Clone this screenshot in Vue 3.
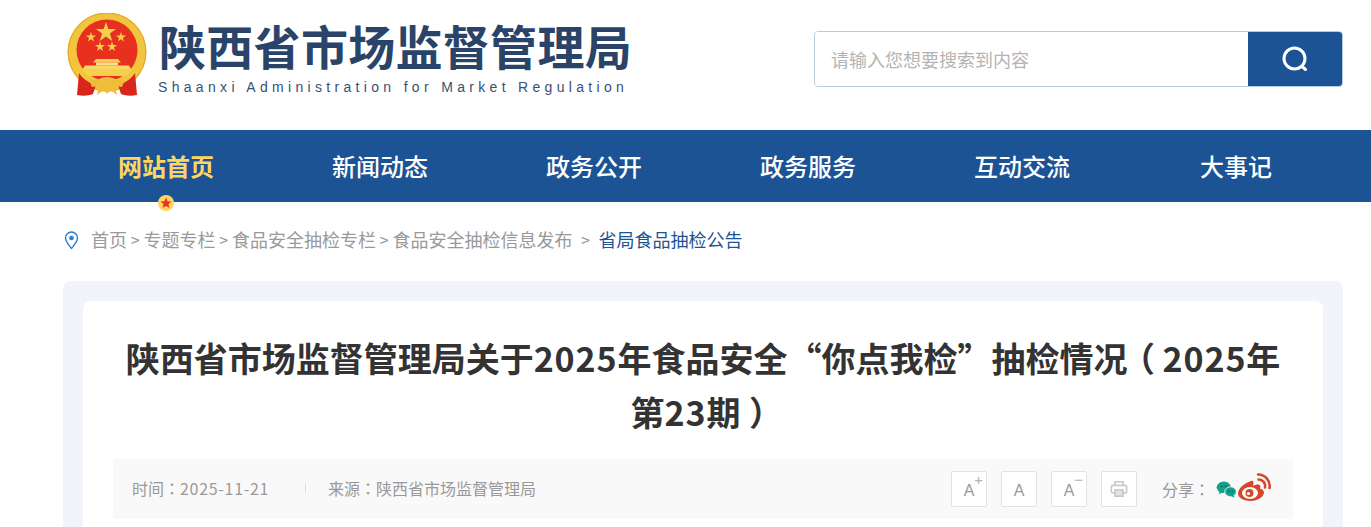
<script setup>
const navItems = ["网站首页", "新闻动态", "政务公开", "政务服务", "互动交流", "大事记"];
const crumbs = ["首页", "专题专栏", "食品安全抽检专栏", "食品安全抽检信息发布"];
const sizeButtons = [
  { key: "up", mark: "+" },
  { key: "normal", mark: "" },
  { key: "down", mark: "−" },
];
</script>

<template>
  <div class="page">
    <header class="top">
      <div class="brand">
        <svg class="emblem" width="80" height="84" viewBox="0 0 80 84">
          <circle cx="40" cy="39" r="39.500" fill="#f3c53f" />
          <circle cx="40" cy="39" r="38.800" fill="none" stroke="#e6a82c" stroke-width="1.200" />
          <circle cx="40" cy="37" r="30.500" fill="#e8301f" />
          <polygon points="39,9 41.400,16 49,16 42.900,20.500 45.200,28 39,23.500 32.800,28 35.100,20.500 29,16 36.600,16" fill="#f6cf4f" />
          <polygon points="24,19 25.200,22.600 29,22.600 25.900,24.900 27.100,28.600 24,26.300 20.900,28.600 22.100,24.900 19,22.600 22.800,22.600" fill="#f6cf4f" />
          <polygon points="54,19 55.200,22.600 59,22.600 55.900,24.900 57.100,28.600 54,26.300 50.900,28.600 52.100,24.900 49,22.600 52.800,22.600" fill="#f6cf4f" />
          <polygon points="33,28.500 34.200,32.100 38,32.100 34.900,34.400 36.100,38.100 33,35.800 29.900,38.100 31.100,34.400 28,32.100 31.800,32.100" fill="#f6cf4f" />
          <polygon points="45,28.500 46.200,32.100 50,32.100 46.900,34.400 48.100,38.100 45,35.800 41.900,38.100 43.100,34.400 40,32.100 43.800,32.100" fill="#f6cf4f" />
          <path d="M29 46h22l3 3.500H26z" fill="#f6cf4f" />
          <rect x="29" y="49.500" width="22" height="3" fill="#f9e08a" />
          <path d="M18 52.500h44l2 3.500H16z" fill="#f8d765" />
          <path d="M14 56h52l-7 7H21z" fill="#f6cf4f" />
          <path d="M12 60C16 66 22 70 29 72L26 81C21 83 16 83 10 82z" fill="#d9261c" />
          <path d="M68 60C64 66 58 70 51 72L54 81C59 83 64 83 70 82z" fill="#d9261c" />
          <path d="M22 66C27 70 33 64 40 64 47 64 53 70 58 66L55 74 48 73 50 82 43 77 40 81 37 77 30 82 32 73 25 74z" fill="#f0bd3a" />
        </svg>
        <div class="brand-text">
          <div class="brand-cn">陕西省市场监督管理局</div>
          <div class="brand-en">Shaanxi Administration for Market Regulation</div>
        </div>
      </div>
      <div class="search">
        <input class="search-input" type="text" placeholder="请输入您想要搜索到内容" />
        <button class="search-btn" type="button">
          <svg width="28" height="28" viewBox="0 0 28 28" fill="none" stroke="#fff" stroke-linecap="round">
            <circle cx="13.500" cy="13.500" r="10.500" stroke-width="3" />
            <path d="M21 21.500l3.500 3" stroke-width="3" />
          </svg>
        </button>
      </div>
    </header>

    <nav class="nav">
      <a v-for="(item, i) in navItems" :key="item" class="nav-item" :class="{ active: i === 0 }">
        {{ item }}
        <span v-if="i === 0" class="nav-badge">
          <svg width="12" height="12" viewBox="0 0 12 12">
            <polygon points="6,0.500 7.600,4.300 11.500,4.500 8.500,7.100 9.500,11 6,8.900 2.500,11 3.500,7.100 0.500,4.500 4.400,4.300" fill="#ea3323" />
          </svg>
        </span>
      </a>
    </nav>

    <div class="crumbs">
      <svg class="pin" width="15" height="19" viewBox="0 0 15 19" fill="none">
        <path d="M7.500 17.500C4.500 13.500 1.500 10.500 1.500 7a6 6 0 0 1 12 0c0 3.500-3 6.500-6 10.500z" stroke="#2b7fc9" stroke-width="1.400" stroke-linejoin="round" />
        <circle cx="7.500" cy="7" r="2.300" fill="#2b7fc9" />
      </svg>
      <template v-for="c in crumbs" :key="c">
        <a class="crumb">{{ c }}</a>
        <span class="sep">&gt;</span>
      </template>
      <a class="crumb current">省局食品抽检公告</a>
    </div>

    <main class="panel">
      <article class="card">
        <h1 class="title">陕西省市场监督管理局关于<span class="num">2025</span>年食品安全“你点我检”抽检情况<span class="paren-open">（</span><span class="num">2025</span>年<br />第<span class="num">23</span>期<span class="paren-close">）</span></h1>
        <div class="meta">
          <div class="meta-left">
            <span class="meta-date">时间<span class="colon">：</span><span class="digits">2025-11-21</span></span>
            <span class="meta-rule"></span>
            <span>来源<span class="colon">：</span>陕西省市场监督管理局</span>
          </div>
          <div class="meta-right">
            <button v-for="b in sizeButtons" :key="b.key" class="tool tool-size" type="button">
              A<span class="tool-mark">{{ b.mark }}</span>
            </button>
            <button class="tool" type="button">
              <svg width="18" height="18" viewBox="0 0 20 20" fill="none" stroke="#c8c8c8" stroke-width="1.800">
                <path d="M5.500 6V2h9v4" />
                <rect x="1.500" y="6" width="17" height="8.500" rx="2" />
                <rect x="5.500" y="11" width="9" height="7" fill="#e2e2e2" />
              </svg>
            </button>
            <span class="share">分享<span class="colon">：</span></span>
            <svg class="wechat" width="21" height="17" viewBox="0 0 23 19">
              <ellipse cx="8.500" cy="7" rx="8" ry="6.500" fill="#12a08a" />
              <path d="M4 11l-1 4 4-2.500z" fill="#12a08a" />
              <ellipse cx="16" cy="12" rx="6.500" ry="5.500" fill="#12a08a" stroke="#f9f9f9" stroke-width="1" />
              <path d="M19 15.500l1.500 3-4-1.500z" fill="#12a08a" />
              <circle cx="6" cy="6" r="1" fill="#0a5f52" />
              <circle cx="11" cy="6" r="1" fill="#0a5f52" />
              <circle cx="14" cy="11.500" r=".9" fill="#0a5f52" />
              <circle cx="18" cy="11.500" r=".9" fill="#0a5f52" />
            </svg>
            <svg class="weibo" width="33" height="28" viewBox="0 0 33 28">
              <path d="M13 8C6 10 0 16 0 20.500 0 25 6 28 12.500 28 20 28 26 23.500 26 19.500c0-2.500-2.500-3.500-4-4 .6-1.600.5-3-.6-3.600-1.600-.8-4.400 0-6.400 1 .6-2.500.6-4-.2-4.900-.4-.4-1-.4-1.800 0z" fill="#d4472a" />
              <ellipse cx="12" cy="20" rx="8" ry="6" fill="#fff" />
              <circle cx="11.500" cy="20" r="4" fill="#d4472a" />
              <circle cx="10.500" cy="20.500" r="1.600" fill="#fff" />
              <path d="M20.500 6.500a6.500 6.500 0 0 1 6.500 8" fill="none" stroke="#d4472a" stroke-width="2.600" stroke-linecap="round" />
              <path d="M20 1.500a11.500 11.500 0 0 1 11.500 13.500" fill="none" stroke="#d4472a" stroke-width="2.600" stroke-linecap="round" />
            </svg>
          </div>
        </div>
      </article>
    </main>
  </div>
</template>

<style>
html, body {
  overflow: hidden;
  background: #fff;
}
</style>

<style scoped>
.page {
  font-family: "Noto Sans CJK SC", "Noto Sans", sans-serif;
  height: 527px;
  overflow: hidden;
}

.top {
  height: 130px;
  box-sizing: border-box;
  padding: 13px 28px 0 67px;
  display: flex;
  justify-content: space-between;
  align-items: flex-start;
}

.brand {
  display: flex;
  gap: 12px;
}

.emblem {
  display: block;
}

.brand-cn {
  font-size: 47px;
  line-height: 64px;
  font-weight: 700;
  letter-spacing: 0.3px;
  color: #2a4469;
  white-space: nowrap;
  margin-bottom: 2px;
}

.brand-en {
  margin-left: -1px;
  font-family: "Liberation Sans", sans-serif;
  font-size: 14px;
  line-height: 16px;
  letter-spacing: 4.32px;
  color: #3a5072;
  white-space: nowrap;
}

.search {
  margin-top: 18px;
  width: 529px;
  height: 56px;
  box-sizing: border-box;
  border: 1px solid #b4cde0;
  border-radius: 4px;
  display: flex;
  overflow: hidden;
}

.search-input {
  flex: 1;
  min-width: 0;
  border: none;
  outline: none;
  padding: 0 16px;
  font-family: inherit;
  font-size: 18px;
  background: #fff;
}

.search-input::placeholder {
  color: #b4b4b4;
}

.search-btn {
  width: 94px;
  border: none;
  padding: 0;
  background: #1b5394;
  display: flex;
  align-items: center;
  justify-content: center;
}

.nav {
  height: 72px;
  padding-left: 59px;
  background: #1b5394;
  display: flex;
}

.nav-item {
  position: relative;
  width: 214px;
  text-align: center;
  font-size: 24px;
  font-weight: 500;
  line-height: 72px;
  color: #fff;
}

.nav-item.active {
  color: #ffd561;
  font-weight: 700;
}

.nav-badge {
  position: absolute;
  left: 99px;
  top: 65px;
  width: 16px;
  height: 16px;
  border-radius: 50%;
  background: #ffd561;
  display: flex;
  align-items: center;
  justify-content: center;
}

.crumbs {
  height: 79px;
  box-sizing: border-box;
  padding: 0 0 6px 64px;
  display: flex;
  align-items: center;
  font-size: 18px;
  color: #999;
  white-space: nowrap;
}

.pin {
  margin: 4px 12px 0 0;
}

.sep {
  width: 16.500px;
  text-align: center;
  font-size: 16px;
}

.sep:nth-last-child(2) {
  width: 26px;
}

.crumb.current {
  color: #1b5394;
}

.panel {
  margin-left: 63px;
  width: 1280px;
  box-sizing: border-box;
  padding: 20px 20px 0;
  height: 260px;
  background: #f1f5f9;
  border-radius: 8px 8px 0 0;
}

.card {
  padding: 30px 30px 30px;
  background: #fff;
  border-radius: 8px 8px 0 0;
}

.title {
  margin: 0 0 20px;
  font-size: 34px;
  line-height: 54px;
  font-weight: 700;
  color: #333;
  text-align: center;
}

.num {
  letter-spacing: 0.9px;
}

.paren-open {
  font-feature-settings: "palt";
  margin: 0 9px;
}

.paren-close {
  font-feature-settings: "palt";
  margin: 0 8px 0 10px;
}

.meta {
  height: 60px;
  padding: 0 22px 0 19px;
  background: #f9f9f9;
  display: flex;
  align-items: center;
  justify-content: space-between;
  font-size: 16px;
  color: #999;
}

.meta-left,
.meta-right {
  display: flex;
  align-items: center;
}

.meta-left {
  margin-top: -2px;
}

.colon {
  font-family: "Noto Sans CJK TC", sans-serif;
}

.digits {
  letter-spacing: 0.7px;
}

.meta-date {
  width: 173px;
}

.meta-rule {
  width: 1px;
  height: 10px;
  margin-right: 22px;
  background: #ddd;
}

.meta-right {
  gap: 14px;
}

.tool {
  position: relative;
  width: 36px;
  height: 36px;
  padding: 0;
  border: 1px solid #e2e2e2;
  border-radius: 2px;
  background: #fff;
  font-family: "Liberation Sans", sans-serif;
  font-size: 16px;
  color: #999;
  display: flex;
  align-items: center;
  justify-content: center;
}

.tool-size {
  padding-top: 4px;
}

.tool-mark {
  position: absolute;
  right: 3px;
  top: 0;
  font-size: 15px;
  line-height: 15px;
  color: #b4b4b4;
}

.share {
  margin-left: 11px;
  margin-right: -8px;
  width: 48px;
  white-space: nowrap;
}

.wechat {
  margin-right: -13px;
}

.weibo {
  margin-top: -4px;
}
</style>
